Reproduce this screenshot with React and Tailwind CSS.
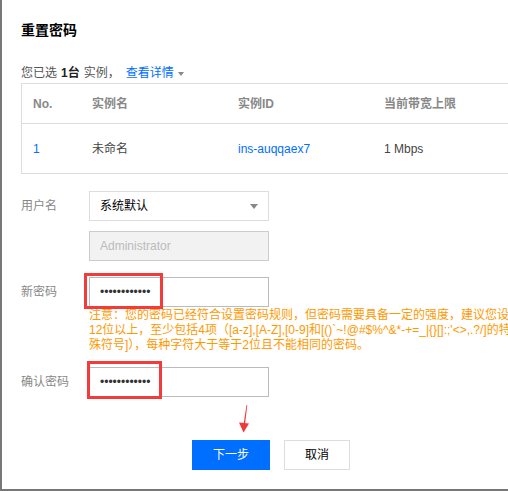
import React from "react";

const font = { fontFamily: '"Liberation Sans", "Noto Sans CJK SC", sans-serif' };

function Label({ children }) {
  return (
    <div className="w-[68px] shrink-0 text-[12px] leading-[30px] text-[#888]">{children}</div>
  );
}

export default function App() {
  return (
    <div
      className="relative w-[508px] h-[491px] overflow-hidden bg-white border-l-2 border-b-2 border-[#777] pl-[19px] pt-[20px]"
      style={font}
    >
      <div className="text-[14px] leading-[20px] font-bold text-black">重置密码</div>

      <div className="mt-[24px] flex items-center text-[12px] leading-[18px] text-[#555] whitespace-nowrap">
        <span>您已选</span>
        <span className="ml-[4px] font-bold text-[#222]">1台</span>
        <span className="ml-[4px]">实例，</span>
        <span className="ml-[6px] text-[#006eff]">查看详情</span>
        <span className="ml-[4px] mt-[1px] w-0 h-0 border-l-[3.5px] border-r-[3.5px] border-t-[4px] border-l-transparent border-r-transparent border-t-[#888]" />
      </div>

      <div className="mt-[1px] w-[520px] border border-[#ddd] text-[12px] whitespace-nowrap">
        <div className="flex h-[40px] items-center font-bold text-[#888] border-b border-[#ddd]">
          <div className="w-[59px] pl-[11px]">No.</div>
          <div className="w-[146px] pl-[11px]">实例名</div>
          <div className="w-[146px] pl-[11px]">实例ID</div>
          <div className="pl-[11px]">当前带宽上限</div>
        </div>
        <div className="flex h-[49px] items-center text-[#444]">
          <div className="w-[59px] pl-[11px] text-[#006eff]">1</div>
          <div className="w-[146px] pl-[11px]">未命名</div>
          <div className="w-[146px] pl-[11px] text-[#006eff]">ins-auqqaex7</div>
          <div className="pl-[11px]">1 Mbps</div>
        </div>
      </div>

      <div className="mt-[17px] flex flex-col">
        <div className="flex">
          <Label>用户名</Label>
          <div className="flex flex-col gap-[10px]">
            <div className="w-[180px] h-[30px] border border-[#ddd] bg-white flex items-center justify-between pl-[10px] pr-[10px] text-[12px] text-black">
              <span>系统默认</span>
              <span className="w-0 h-0 border-l-4 border-r-4 border-t-[5px] border-l-transparent border-r-transparent border-t-[#888]" />
            </div>
            <div className="w-[180px] h-[30px] border border-[#ccc] bg-[#f2f2f2] flex items-center pl-[10px] text-[12px] text-[#bbb]">
              Administrator
            </div>
          </div>
        </div>

        <div className="mt-[16px] flex">
          <Label>新密码</Label>
          <div className="flex flex-col">
            <div className="relative w-[180px] h-[30px] border border-[#bbb] flex items-center pl-[10px] text-[12px] text-[#333] tracking-[0px]">
              <span>••••••••••••</span>
              <div className="absolute left-[-6px] top-[-5px] w-[79px] h-[36px] border-[3px] border-[#f43b3b]" />
            </div>
            <div className="text-[12px] leading-[15px] text-[#ff9900] whitespace-nowrap pt-[1px]">
              <div>注意：您的密码已经符合设置密码规则，但密码需要具备一定的强度，建议您设置</div>
              <div>12位以上，至少包括4项（[a-z],[A-Z],[0-9]和[()`~!@#$%^&amp;*-+=_|{"{}"}[]:;'&lt;&gt;,.?/]的特</div>
              <div>殊符号]），每种字符大于等于2位且不能相同的密码。</div>
            </div>
          </div>
        </div>

        <div className="mt-[14px] flex">
          <Label>确认密码</Label>
          <div className="relative w-[180px] h-[30px] border border-[#bbb] flex items-center pl-[10px] text-[12px] text-[#333]">
            <span>••••••••••••</span>
            <div className="absolute left-[-3px] top-[-7px] w-[75px] h-[38px] border-[3px] border-[#f43b3b]" />
          </div>
        </div>

        <div className="mt-[43px] flex gap-[14px] pl-[171px]">
          <button className="w-[78px] h-[30px] bg-[#006eff] text-white text-[12px]">下一步</button>
          <button className="w-[66px] h-[30px] border border-[#ddd] bg-white text-black text-[12px]">取消</button>
        </div>
      </div>

      <svg
        className="absolute left-[235px] top-[403px]"
        width="14"
        height="31"
        viewBox="0 0 14 31"
      >
        <path d="M9.5 2 L10.3 2.3 L8 21 L6.6 21 Z" fill="#f03a3a" />
        <path d="M2 19.5 L12 20.5 L6.5 29.5 Z" fill="#f03a3a" />
      </svg>
    </div>
  );
}
